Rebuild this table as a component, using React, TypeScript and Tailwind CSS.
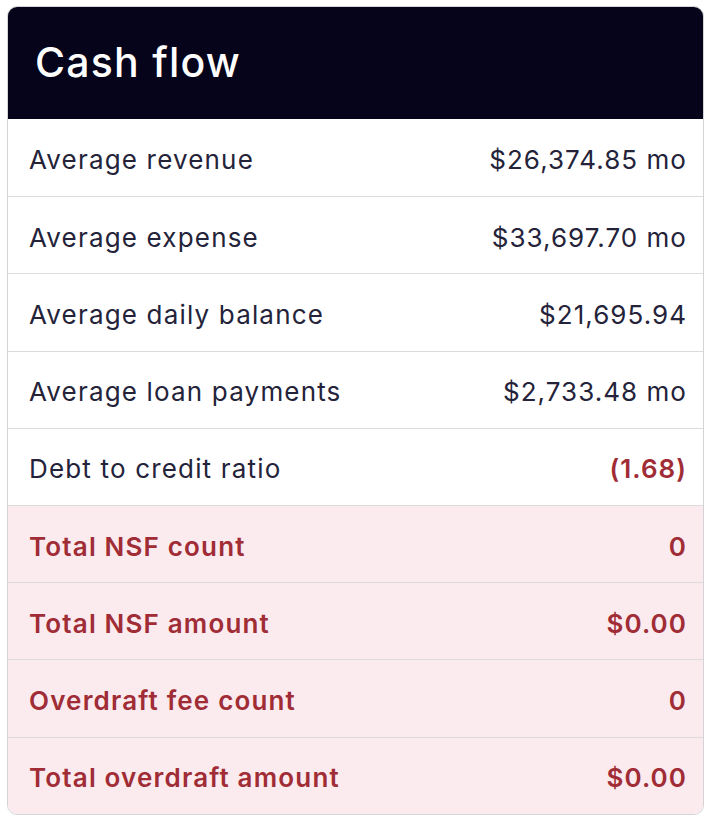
import React from 'react';

type Row = { label: string; value: string; alert?: boolean; red?: boolean };

const rows: Row[] = [
  { label: 'Average revenue', value: '$26,374.85 mo' },
  { label: 'Average expense', value: '$33,697.70 mo' },
  { label: 'Average daily balance', value: '$21,695.94' },
  { label: 'Average loan payments', value: '$2,733.48 mo' },
  { label: 'Debt to credit ratio', value: '(1.68)', red: true },
  { label: 'Total NSF count', value: '0', alert: true },
  { label: 'Total NSF amount', value: '$0.00', alert: true },
  { label: 'Overdraft fee count', value: '0', alert: true },
  { label: 'Total overdraft amount', value: '$0.00', alert: true },
];

export default function App() {
  return (
    <div className="w-[712px] h-[818px] bg-white pt-[6px] pl-[7px] font-['Inter',sans-serif]">
      <div className="w-[697px] rounded-[10px] border border-[#d4d4d8] overflow-hidden">
        {/* Header */}
        <div className="h-[113px] bg-[#05041a] flex items-center px-[28px] -mx-px -mt-px">
          <h1 className="text-[41px] font-medium text-white tracking-[0.03em]">Cash flow</h1>
        </div>

        {rows.map((r, i) => (
          <div
            key={r.label}
            className={
              'h-[77.2px] flex items-center justify-between pl-[21px] pr-[16px] pt-[4px] text-[26px] ' +
              (i > 0 ? 'border-t border-[#dcdcdc] ' : '') +
              (r.alert ? 'bg-[#fbeaee] text-[#a02c36] font-semibold' : 'bg-white text-[#24233a]')
            }
          >
            <span className="tracking-[0.045em]">{r.label}</span>
            <span className={'tracking-[0.04em] ' + (r.red ? 'text-[#a02c36] font-semibold' : '')}>{r.value}</span>
          </div>
        ))}
      </div>
    </div>
  );
}
